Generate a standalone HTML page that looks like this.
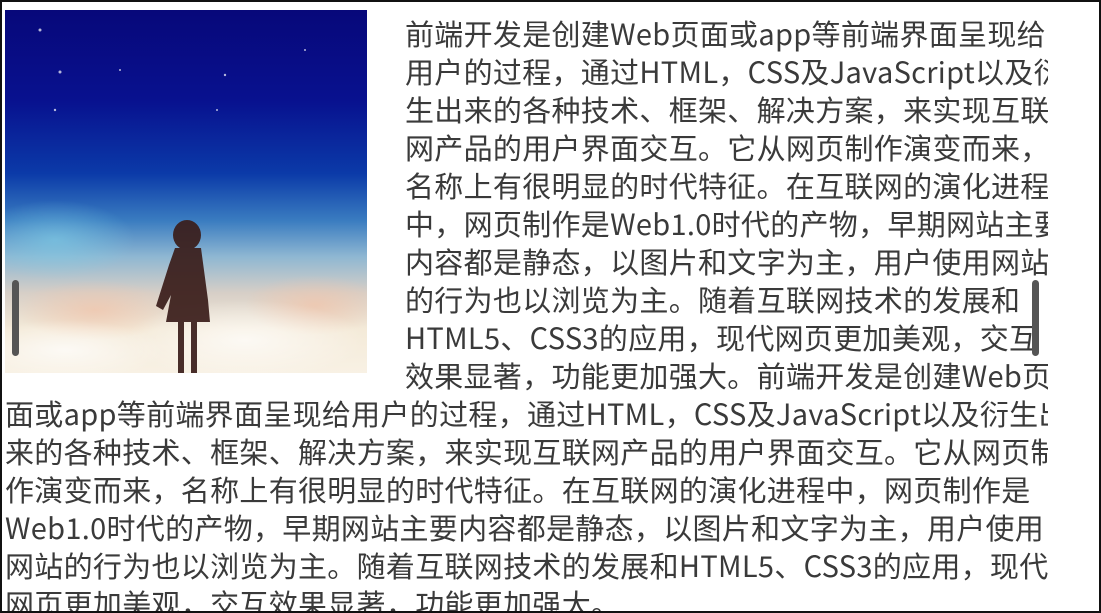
<!DOCTYPE html>
<html><head><meta charset="utf-8"><style>
html,body{margin:0;padding:0;background:#fff;width:1101px;height:613px;overflow:hidden}
.frame{position:absolute;left:0;top:0;width:1097px;height:609px;border:2px solid #111;overflow:hidden;background:#fff}
.clip{position:absolute;left:0;top:0;width:1046px;height:613px;overflow:hidden}
.img{position:absolute;left:3px;top:8px;width:362px;height:363px;overflow:hidden;
background:linear-gradient(180deg,#07087a 0%,#08118f 25%,#0b3aa8 45%,#3a7cc0 58%,#8fb7d2 68%,#d7cfc7 78%,#f4ead8 88%,#f8f1e4 100%)}
.l{position:absolute;white-space:nowrap;font-family:"Noto Sans CJK SC","Liberation Sans",sans-serif;font-size:29px;color:#3a3a3a;line-height:38px;letter-spacing:0.3px}
.bar{position:absolute;width:7px;height:76px;background:#555;border-radius:4px}
</style></head><body>
<div class="frame">
<div class="clip">
<div class="img">
<svg width="362" height="363" viewBox="0 0 362 363">
<defs><radialGradient id="c" cx="0.5" cy="0.5" r="0.5"><stop offset="0" stop-color="#fff" stop-opacity=".7"/><stop offset="1" stop-color="#fff" stop-opacity="0"/></radialGradient>
<radialGradient id="p" cx="0.5" cy="0.5" r="0.5"><stop offset="0" stop-color="#f2c3a8" stop-opacity=".7"/><stop offset="1" stop-color="#f2c3a8" stop-opacity="0"/></radialGradient>
<radialGradient id="t" cx="0.5" cy="0.5" r="0.5"><stop offset="0" stop-color="#7fd0e8" stop-opacity=".6"/><stop offset="1" stop-color="#7fd0e8" stop-opacity="0"/></radialGradient></defs>
<ellipse cx="50" cy="230" rx="80" ry="40" fill="url(#t)"/>
<ellipse cx="90" cy="300" rx="80" ry="30" fill="url(#p)"/>
<ellipse cx="310" cy="295" rx="70" ry="30" fill="url(#p)"/>
<ellipse cx="240" cy="330" rx="120" ry="40" fill="url(#c)"/>
<ellipse cx="60" cy="340" rx="100" ry="30" fill="url(#c)"/>
<g fill="#fff" opacity=".7"><circle cx="35" cy="20" r="1.5"/><circle cx="55" cy="62" r="1.5"/><circle cx="220" cy="65" r="1.2"/><circle cx="115" cy="60" r="1"/><circle cx="300" cy="40" r="1"/><circle cx="212" cy="100" r="1"/><circle cx="50" cy="100" r="1.2"/></g>
<g fill="#3a1d1a" opacity=".92">
<ellipse cx="182" cy="225" rx="14" ry="15"/>
<path d="M170 238 L196 238 L203 290 L205 312 L161 312 L166 285 L158 300 L151 296 L164 255 Z"/>
<rect x="173" y="310" width="6" height="58"/><rect x="186" y="310" width="6" height="58"/>
</g>
</svg>
</div>
<div class="l" style="left:403px;top:12px">前端开发是创建Web页面或app等前端界面呈现给</div>
<div class="l" style="left:403px;top:50px">用户的过程，通过HTML，CSS及JavaScript以及衍</div>
<div class="l" style="left:403px;top:88px">生出来的各种技术、框架、解决方案，来实现互联</div>
<div class="l" style="left:403px;top:126px">网产品的用户界面交互。它从网页制作演变而来，</div>
<div class="l" style="left:403px;top:164px">名称上有很明显的时代特征。在互联网的演化进程</div>
<div class="l" style="left:403px;top:202px">中，网页制作是Web1.0时代的产物，早期网站主要</div>
<div class="l" style="left:403px;top:240px">内容都是静态，以图片和文字为主，用户使用网站</div>
<div class="l" style="left:403px;top:278px">的行为也以浏览为主。随着互联网技术的发展和</div>
<div class="l" style="left:403px;top:316px">HTML5、CSS3的应用，现代网页更加美观，交互</div>
<div class="l" style="left:403px;top:354px">效果显著，功能更加强大。前端开发是创建Web页</div>
<div class="l" style="left:3px;top:392px">面或app等前端界面呈现给用户的过程，通过HTML，CSS及JavaScript以及衍生出</div>
<div class="l" style="left:3px;top:430px">来的各种技术、框架、解决方案，来实现互联网产品的用户界面交互。它从网页制</div>
<div class="l" style="left:3px;top:468px">作演变而来，名称上有很明显的时代特征。在互联网的演化进程中，网页制作是</div>
<div class="l" style="left:3px;top:506px">Web1.0时代的产物，早期网站主要内容都是静态，以图片和文字为主，用户使用</div>
<div class="l" style="left:3px;top:544px">网站的行为也以浏览为主。随着互联网技术的发展和HTML5、CSS3的应用，现代</div>
<div class="l" style="left:3px;top:582px">网页更加美观，交互效果显著，功能更加强大。</div>
</div>
<div class="bar" style="left:10px;top:278px"></div>
<div class="bar" style="left:1030px;top:278px"></div>
</div>
</body></html>
